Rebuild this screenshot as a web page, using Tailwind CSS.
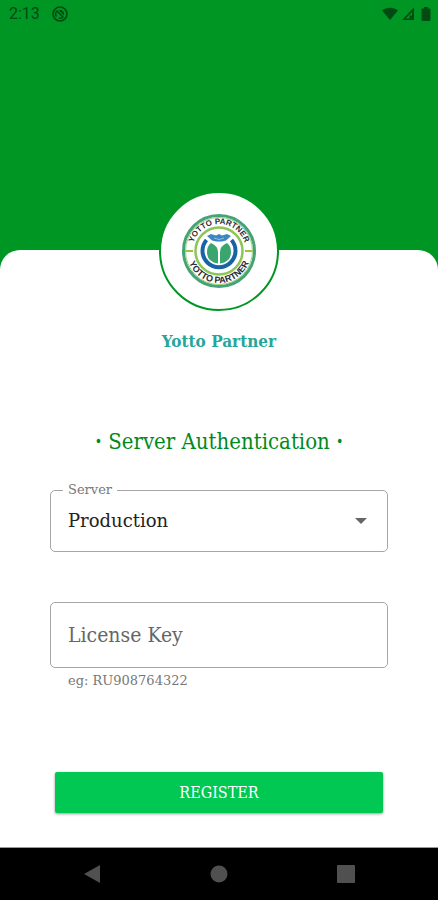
<!DOCTYPE html>
<html lang="en">
<head>
    <meta charset="UTF-8">
    <meta name="viewport" content="width=device-width, initial-scale=1.0">
    <title>Yotto Partner</title>
    <script src="https://cdn.jsdelivr.net/npm/@tailwindcss/browser@4"></script>
</head>
<body class="bg-[#009624] min-h-screen flex flex-col font-['DejaVu_Serif_Condensed','DejaVu_Serif',serif]">
    <!-- Status bar -->
    <header class="h-[250px] shrink-0">
        <div class="h-7 flex items-center pl-[9px] pr-1 text-[#004b12] font-[Roboto,sans-serif]">
            <span class="text-base">2:13</span>
            <svg class="ml-3 w-4 h-4" viewBox="0 0 16 16" fill="none" stroke="currentColor">
                <circle cx="8" cy="8" r="7" stroke-width="1.7"/>
                <path d="M4.500 10.500A4.300 4.300 0 0 1 5 5L11 11A4.300 4.300 0 0 1 7 12" stroke-width="1.5"/>
                <path d="M6.500 4H9.500L12 6.500V9.500Z" fill="currentColor" stroke="none"/>
            </svg>
            <div class="ml-auto flex items-center gap-1">
                <svg class="w-4 h-4" viewBox="0 0 16 16" fill="currentColor">
                    <path d="M0 4.500C4.500 .8 11.500 .8 16 4.500L8 14Z"/>
                </svg>
                <svg class="w-3 h-4" viewBox="0 0 12 16" fill="currentColor">
                    <path d="M12 1.500V14H0ZM10 6L3.500 12.500H7.500V9.500H10Z" fill-rule="evenodd"/>
                </svg>
                <svg class="w-4 h-4" viewBox="0 0 16 16" fill="currentColor">
                    <path d="M6 1H10V2.500H11.500Q12.500 2.500 12.500 3.500V14Q12.500 15 11.500 15H4.500Q3.500 15 3.500 14V3.500Q3.500 2.500 4.500 2.500H6Z"/>
                </svg>
            </div>
        </div>
    </header>

    <!-- Registration sheet -->
    <main class="grow bg-white rounded-t-[20px] px-[50px] pb-[34px] flex flex-col">
        <div class="self-center -mt-[59px] w-[120px] h-[120px] rounded-full bg-white border-2 border-[#009624] flex items-center justify-center">
            <svg class="w-[76px] h-[76px]" viewBox="-38 -38 76 76" role="img" aria-label="Yotto Partner logo">
                <defs>
                    <path id="arc-top" d="M-27 0A27 27 0 0 1 27 0"/>
                    <path id="arc-bottom" d="M-32 0A32 32 0 0 0 32 0"/>
                </defs>
                <circle r="35.500" fill="#fff" stroke="#45a377" stroke-width="3"/>
                <circle r="33.500" fill="none" stroke="#9bcf7a" stroke-width="1"/>
                <circle r="23.500" fill="none" stroke="#8cc656" stroke-width="2.500"/>
                <path d="M-33 -1H-26V1H-33ZM26 -1H33V1H26Z" fill="#9bc53d"/>
                <g font-family="Liberation Sans, sans-serif" font-weight="bold" font-size="8" fill="#2b2b33" text-anchor="middle">
                    <text><textPath href="#arc-top" startOffset="50%">YOTTO PARTNER</textPath></text>
                    <text font-size="9"><textPath href="#arc-bottom" startOffset="50%">YOTTO PARTNER</textPath></text>
                </g>
                <!-- Handshake over two leaves -->
                <path d="M-12.500 -11A16.500 16.500 0 1 0 12.500 -11" fill="none" stroke="#1763a6" stroke-width="4"/>
                <path d="M-12 -15L-8 -17L-3 -15.500L0 -17L3 -15.500L8 -17L12 -15L7 -10.500L3 -9.500H-3L-7 -10.500Z" fill="#3c86c4"/>
                <path d="M-5 -13L0 -11.500L5 -13" fill="none" stroke="#8fc0e4" stroke-width="1"/>
                <path d="M-8 -8Q-1 -5 -1 1V12.500Q-12 11 -12 1Q-12 -5 -8 -8Z" fill="#3aa56e"/>
                <path d="M8 -8Q1 -5 1 1V12.500Q12 11 12 1Q12 -5 8 -8Z" fill="#3aa56e"/>
            </svg>
        </div>
        <h1 class="mt-[18px] text-center text-[17px] leading-6 font-bold text-[#26a69a]">Yotto Partner</h1>

        <h2 class="mt-[74px] text-center text-[22px] leading-7 text-[#008a1c] whitespace-nowrap"><b>·</b> Server Authentication <b>·</b></h2>

        <form class="flex flex-col">
            <fieldset class="mt-[26px] h-[70px] border border-[#a6a6a6] rounded-[5px] px-3 relative">
                <legend class="px-[5px] text-[13px] leading-4 text-[#777] font-['DejaVu_Serif',serif]"><label for="server">Server</label></legend>
                <select id="server" class="w-full h-[46px] px-[5px] appearance-none bg-transparent text-lg text-[#222] outline-none font-['DejaVu_Serif',serif]">
                    <option>Production</option>
                </select>
                <svg class="absolute right-5 top-5 w-3 h-[6px] pointer-events-none" viewBox="0 0 12 6" fill="#666">
                    <path d="M0 0H12L6 6Z"/>
                </svg>
            </fieldset>

            <input id="license" type="text" aria-label="License Key" aria-describedby="license-hint" placeholder="License Key" class="mt-[50px] h-[66px] w-full border border-[#a6a6a6] rounded-[5px] px-[17px] text-[21px] placeholder:text-[#666] outline-none">
            <p id="license-hint" class="mt-[5px] pl-[18px] text-[13px] leading-4 text-[#777] font-['DejaVu_Serif',serif]">eg: RU908764322</p>

            <button type="submit" class="mt-[83px] mx-[5px] h-[41px] rounded-[2px] bg-[#00c853] text-white text-base shadow-[0_1px_3px_rgba(0,0,0,0.4)]">REGISTER</button>
        </form>
    </main>

    <!-- Navigation bar -->
    <nav class="h-[53px] shrink-0 bg-black border-t border-[#999] flex items-center justify-between px-[83px]">
        <button type="button" aria-label="Back">
            <svg class="w-[18px] h-[18px]" viewBox="0 0 18 18" fill="#505050"><path d="M1 9L17 0V18Z"/></svg>
        </button>
        <button type="button" aria-label="Home">
            <svg class="w-[18px] h-[18px]" viewBox="0 0 18 18" fill="#505050"><circle cx="9" cy="9" r="8.500"/></svg>
        </button>
        <button type="button" aria-label="Recent apps">
            <svg class="w-[18px] h-[18px]" viewBox="0 0 18 18" fill="#505050"><rect width="18" height="18" rx="1"/></svg>
        </button>
    </nav>
</body>
</html>
